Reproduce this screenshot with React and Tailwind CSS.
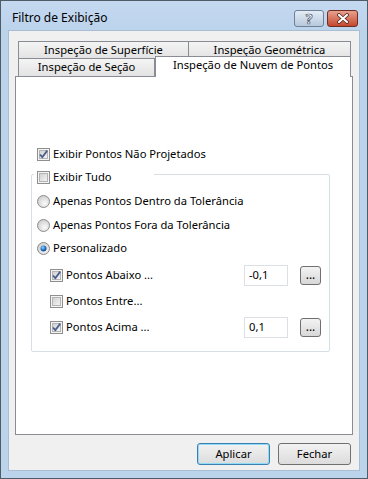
import React from "react";

const font = { fontFamily: '"Noto Sans", "Open Sans", sans-serif' };

function Check({ checked }) {
  return (
    <svg width="13" height="13" viewBox="0 0 13 13" className="shrink-0">
      <defs>
        <linearGradient id="cbg" x1="0" y1="0" x2="1" y2="1">
          <stop offset="0" stopColor="#cfcfcf" />
          <stop offset="1" stopColor="#f6f6f6" />
        </linearGradient>
      </defs>
      <rect x="0.5" y="0.5" width="12" height="12" fill="#f4f4f4" stroke="#8f8f8f" />
      <rect x="2.5" y="2.5" width="8" height="8" fill="url(#cbg)" stroke="#b4b4b4" />
      {checked && (
        <path d="M3 6.5 L5.3 9.2 L10.2 2.6" fill="none" stroke="#4a5f8d" strokeWidth="1.8" strokeLinejoin="round" />
      )}
    </svg>
  );
}

function Radio({ checked }) {
  return (
    <svg width="13" height="13" viewBox="0 0 13 13" className="shrink-0">
      <defs>
        <radialGradient id="rbg" cx="0.6" cy="0.65" r="0.7">
          <stop offset="0" stopColor="#fafafa" />
          <stop offset="1" stopColor="#cbcbcb" />
        </radialGradient>
        <radialGradient id="rdot" cx="0.4" cy="0.35" r="0.7">
          <stop offset="0" stopColor="#9fd3ff" />
          <stop offset="0.6" stopColor="#1f6ec0" />
          <stop offset="1" stopColor="#0f3f7a" />
        </radialGradient>
      </defs>
      <circle cx="6.5" cy="6.5" r="6" fill="url(#rbg)" stroke="#8c8c8c" />
      {checked && <circle cx="6.5" cy="6.5" r="3" fill="url(#rdot)" />}
    </svg>
  );
}

function Row({ children, className = "" }) {
  return <div className={"flex items-center h-[16px] gap-[3px] " + className}>{children}</div>;
}

function DotsButton() {
  return (
    <div className="ml-[9px] w-[21px] h-[19px] rounded-[3px] border border-[#707070] bg-gradient-to-b from-[#f3f3f3] to-[#d8d8d8] flex items-end justify-center pb-[3px]">
      <span className="text-[12px] leading-none text-black tracking-[0px]">...</span>
    </div>
  );
}

function ValueBox({ value }) {
  return (
    <div className="ml-auto w-[44px] h-[21px] border border-[#dcdfe6] bg-white flex items-center pl-[4px]">
      {value}
    </div>
  );
}

export default function App() {
  return (
    <div
      className="w-[368px] h-[479px] border border-[#4f5b67] bg-[#bcd3ec] flex flex-col text-[11.2px] text-black"
      style={font}
    >
      {/* title bar */}
      <div className="h-[29px] flex items-start shrink-0 bg-gradient-to-b from-[#c4d9f0] to-[#bcd3ec]">
        <div className="pl-[11px] pt-[8px] text-[12px] leading-[18px]">Filtro de Exibição</div>
        <div className="ml-auto flex gap-[3px] pt-[9px] pr-[9px]">
          <div className="w-[30px] h-[17px] rounded-[3px] border border-[#6e8197] bg-gradient-to-b from-[#e4ecf6] to-[#b7c8dc] flex items-center justify-center">
            <span className="text-[14px] font-bold leading-none text-white" style={{ WebkitTextStroke: "0.7px #3d4f66" }}>?</span>
          </div>
          <div className="w-[31px] h-[17px] rounded-[3px] border border-[#6f2d22] bg-gradient-to-b from-[#e7a08f] to-[#c5452d] flex items-center justify-center">
            <svg width="14" height="11" viewBox="0 0 14 11">
              <path d="M3 2 L11 9 M11 2 L3 9" stroke="#4a1c14" strokeWidth="3.6" strokeLinecap="round" />
              <path d="M3 2 L11 9 M11 2 L3 9" stroke="#ffffff" strokeWidth="2.2" strokeLinecap="round" />
            </svg>
          </div>
        </div>
      </div>

      {/* client */}
      <div className="mx-[7px] mb-[7px] flex-1 bg-[#f0f0f0] flex flex-col pt-[10px] pl-[6px] pr-[8px] border border-[#a9bdd3]">
        {/* tabs */}
        <div className="flex ml-[3px] h-[17px]">
          <div className="w-[171px] border border-b-0 border-[#898c95] bg-gradient-to-b from-[#f4f4f4] to-[#e3e3e3] flex items-center justify-center">
            Inspeção de Superfície
          </div>
          <div className="w-[162px] border border-b-0 border-l-0 border-[#898c95] bg-gradient-to-b from-[#f4f4f4] to-[#e3e3e3] flex items-center justify-center">
            Inspeção Geométrica
          </div>
        </div>
        <div className="flex ml-[3px] h-[18px] items-start">
          <div className="w-[138px] h-[18px] border border-b-0 border-[#898c95] bg-gradient-to-b from-[#f4f4f4] to-[#e3e3e3] flex items-center justify-center">
            Inspeção de Seção
          </div>
          <div className="relative z-10 -mt-[2px] w-[197px] h-[21px] border border-b-0 border-[#898c95] bg-white flex items-start justify-center pt-0">
            Inspeção de Nuvem de Pontos
          </div>
        </div>

        {/* panel */}
        <div className="w-[338px] h-[359px] border border-[#898c95] bg-white flex flex-col pl-[21px]">
          <Row className="mt-[69px]">
            <Check checked />
            <span>Exibir Pontos Não Projetados</span>
          </Row>

          {/* group box */}
          <div className="-ml-[6px] mt-[12px] w-[299px] border border-[#d5dfe5] rounded-[2px] flex flex-col pb-[13px]">
            <div className="-mt-[6px] ml-[2px] w-[120px] pl-[3px] bg-white">
              <Row>
                <Check />
                <span>Exibir Tudo</span>
              </Row>
            </div>
            <div className="pl-[5px] flex flex-col">
              <Row className="mt-[8px]">
                <Radio />
                <span>Apenas Pontos Dentro da Tolerância</span>
              </Row>
              <Row className="mt-[8px]">
                <Radio />
                <span>Apenas Pontos Fora da Tolerância</span>
              </Row>
              <Row className="mt-[7px]">
                <Radio checked />
                <span>Personalizado</span>
              </Row>
            </div>
            <div className="pl-[18px] pr-[8px] flex flex-col gap-[5px] mt-[9px]">
              <div className="flex items-center h-[21px] gap-[3px]">
                <Check checked />
                <span>Pontos Abaixo ...</span>
                <ValueBox value="-0,1" />
                <DotsButton />
              </div>
              <div className="flex items-center h-[21px] gap-[3px]">
                <Check />
                <span>Pontos Entre...</span>
              </div>
              <div className="flex items-center h-[21px] gap-[3px]">
                <Check checked />
                <span>Pontos Acima ...</span>
                <ValueBox value="0,1" />
                <DotsButton />
              </div>
            </div>
          </div>
        </div>

        {/* buttons */}
        <div className="flex justify-end gap-[8px] mt-[8px]">
          <div className="w-[73px] h-[22px] rounded-[3px] border border-[#3c7fb1] shadow-[inset_0_0_0_1px_#8fdcf8] bg-gradient-to-b from-[#f2f2f2] to-[#dcdcdc] flex items-center justify-center">
            Aplicar
          </div>
          <div className="w-[73px] h-[22px] rounded-[3px] border border-[#707070] bg-gradient-to-b from-[#f2f2f2] to-[#dcdcdc] flex items-center justify-center">
            Fechar
          </div>
        </div>
      </div>
    </div>
  );
}
